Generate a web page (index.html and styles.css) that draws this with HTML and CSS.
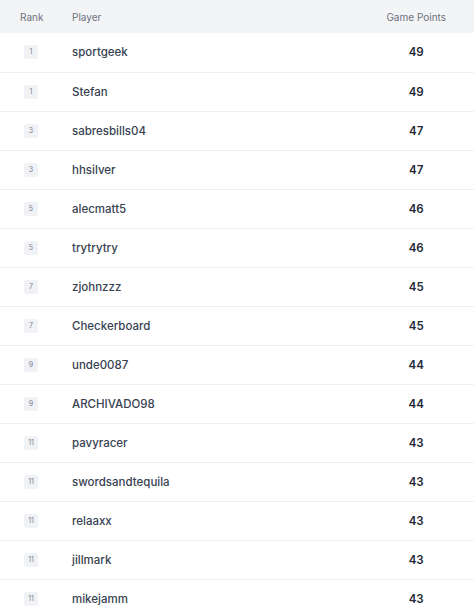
FILE: index.html
```html
<html lang="en">

<head>
    <meta charset="UTF-8">
    <meta name="viewport" content="width=device-width, initial-scale=1.0">
    <title>Leaderboard</title>

    <link rel="stylesheet" href="styles.css">
</head>

<body>

    <table class="board">
        <thead>
            <tr>
                <th class="rank">Rank</th>
                <th class="player">Player</th>
                <th class="points">Game Points</th>
            </tr>
        </thead>
        <tbody>
            <tr><td class="rank"><span class="badge">1</span></td><td class="player">sportgeek</td><td class="points">49</td></tr>
            <tr><td class="rank"><span class="badge">1</span></td><td class="player">Stefan</td><td class="points">49</td></tr>
            <tr><td class="rank"><span class="badge">3</span></td><td class="player">sabresbills04</td><td class="points">47</td></tr>
            <tr><td class="rank"><span class="badge">3</span></td><td class="player">hhsilver</td><td class="points">47</td></tr>
            <tr><td class="rank"><span class="badge">5</span></td><td class="player">alecmatt5</td><td class="points">46</td></tr>
            <tr><td class="rank"><span class="badge">5</span></td><td class="player">trytrytry</td><td class="points">46</td></tr>
            <tr><td class="rank"><span class="badge">7</span></td><td class="player">zjohnzzz</td><td class="points">45</td></tr>
            <tr><td class="rank"><span class="badge">7</span></td><td class="player">Checkerboard</td><td class="points">45</td></tr>
            <tr><td class="rank"><span class="badge">9</span></td><td class="player">unde0087</td><td class="points">44</td></tr>
            <tr><td class="rank"><span class="badge">9</span></td><td class="player">ARCHIVADO98</td><td class="points">44</td></tr>
            <tr><td class="rank"><span class="badge">11</span></td><td class="player">pavyracer</td><td class="points">43</td></tr>
            <tr><td class="rank"><span class="badge">11</span></td><td class="player">swordsandtequila</td><td class="points">43</td></tr>
            <tr><td class="rank"><span class="badge">11</span></td><td class="player">relaaxx</td><td class="points">43</td></tr>
            <tr><td class="rank"><span class="badge">11</span></td><td class="player">jillmark</td><td class="points">43</td></tr>
            <tr><td class="rank"><span class="badge">11</span></td><td class="player">mikejamm</td><td class="points">43</td></tr>
        </tbody>
    </table>

</body>

</html>
```

FILE: styles.css
```css
body {
    background: rgb(255, 255, 255);
    margin: 0px;
    padding: 0px;
    font-family: Inter, "Noto Sans", sans-serif;
}
.board {
    width: 100%;
    border-collapse: collapse;
}
thead tr {
    background-color: rgb(243, 244, 246);
}
td {
    height: 39px;
    padding: 0;
    border-bottom: 1px solid rgb(238, 239, 242);
}
.rank {
    width: 72px;
    text-align: center;
    padding-right: 10px;
    box-sizing: border-box;
}
.player {
    font-size: 11.5px;
    font-weight: 500;
    color: rgb(55, 65, 81);
}
.points {
    width: 86px;
    box-sizing: border-box;
    text-align: center;
    padding-right: 28px;
    font-size: 11.5px;
    font-weight: 600;
    color: rgb(31, 41, 55);
    white-space: nowrap;
}
.board th {
    height: 33px;
    padding: 0;
    font-size: 10px;
    font-weight: 400;
    color: rgb(107, 114, 128);
    text-align: left;
}
.board th.rank {
    padding-left: 20px;
}
.board th.points {
    text-align: right;
    padding-right: 28px;
}
.badge {
    display: inline-block;
    min-width: 14px;
    height: 14px;
    line-height: 14px;
    padding: 0 2px;
    box-sizing: border-box;
    border-radius: 2px;
    background-color: rgb(241, 242, 245);
    color: rgb(120, 126, 138);
    font-size: 7px;
    text-align: center;
    vertical-align: middle;
}
```
